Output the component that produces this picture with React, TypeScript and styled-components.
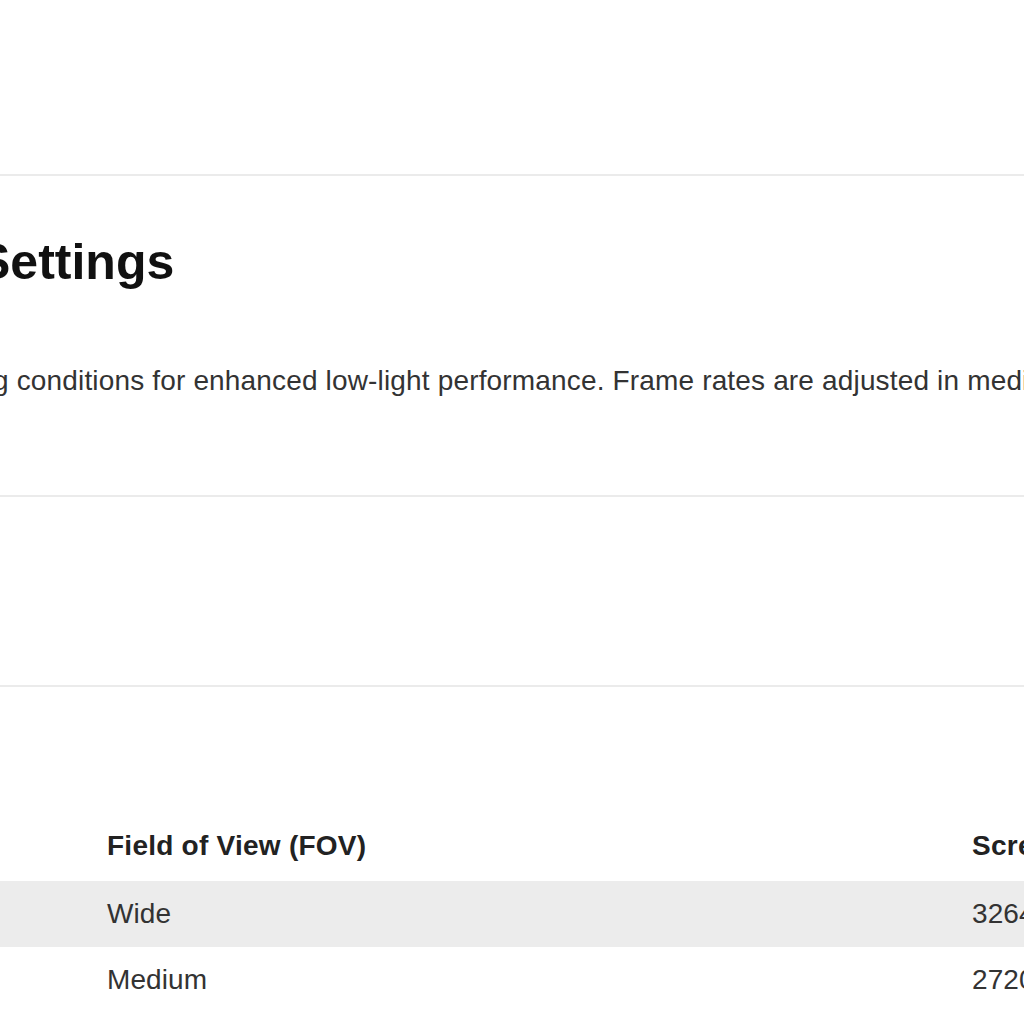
import React from "react";
import styled, { createGlobalStyle } from "styled-components";

const GlobalStyle = createGlobalStyle`
  html, body {
    margin: 0;
    padding: 0;
    background: #ffffff;
  }
  body {
    font-family: "Liberation Sans", Arial, sans-serif;
    color: #333333;
  }
`;

const Page = styled.div`
  width: 1024px;
  height: 1024px;
  overflow: hidden;
  background: #ffffff;
`;

const TopSpace = styled.div`
  height: 174px;
`;

const Divider = styled.hr`
  margin: 0;
  border: 0;
  height: 2px;
  background: #ebebeb;
`;

const IntroSection = styled.section`
  padding: 56px 0 94px;
  display: flex;
  flex-direction: column;
  gap: 69px;
`;

const Heading = styled.h1`
  margin: 0 0 0 -23px;
  font-family: "Liberation Sans", Arial, sans-serif;
  font-weight: 700;
  font-size: 50px;
  line-height: 60px;
  color: #111111;
  white-space: nowrap;
`;

const Lead = styled.p`
  margin: 0 0 0 -7px;
  font-size: 28px;
  line-height: 40px;
  letter-spacing: 0.16px;
  color: #333333;
  white-space: nowrap;
`;

const EmptySection = styled.section`
  height: 188px;
`;

const TableSection = styled.section`
  padding-top: 126px;
`;

const Row = styled.div<{ $shaded?: boolean; $head?: boolean }>`
  display: grid;
  grid-template-columns: 865px 1fr;
  padding-left: 93px;
  background: ${(p) => (p.$shaded ? "#ececec" : "transparent")};
  padding-bottom: ${(p) => (p.$head ? "2px" : "0")};
`;

const Cell = styled.div<{ $head?: boolean }>`
  padding: 14px;
  font-size: 28px;
  line-height: 38px;
  letter-spacing: ${(p) => (p.$head ? "0.25px" : "0.1px")};
  font-weight: ${(p) => (p.$head ? 700 : 400)};
  color: ${(p) => (p.$head ? "#222222" : "#333333")};
  white-space: nowrap;
`;

const rows = [
  { fov: "Wide", res: "3264 x 2448" },
  { fov: "Medium", res: "2720 x 2040" },
];

export default function App() {
  return (
    <>
      <GlobalStyle />
      <Page>
        <TopSpace />
        <Divider />
        <IntroSection>
          <Heading>Settings</Heading>
          <Lead>
            g conditions for enhanced low-light performance. Frame rates are adjusted in media
          </Lead>
        </IntroSection>
        <Divider />
        <EmptySection />
        <Divider />
        <TableSection>
          <Row $head>
            <Cell $head>Field of View (FOV)</Cell>
            <Cell $head>Screen Resolution</Cell>
          </Row>
          {rows.map((r, i) => (
            <Row key={r.fov} $shaded={i % 2 === 0}>
              <Cell>{r.fov}</Cell>
              <Cell>{r.res}</Cell>
            </Row>
          ))}
        </TableSection>
      </Page>
    </>
  );
}
